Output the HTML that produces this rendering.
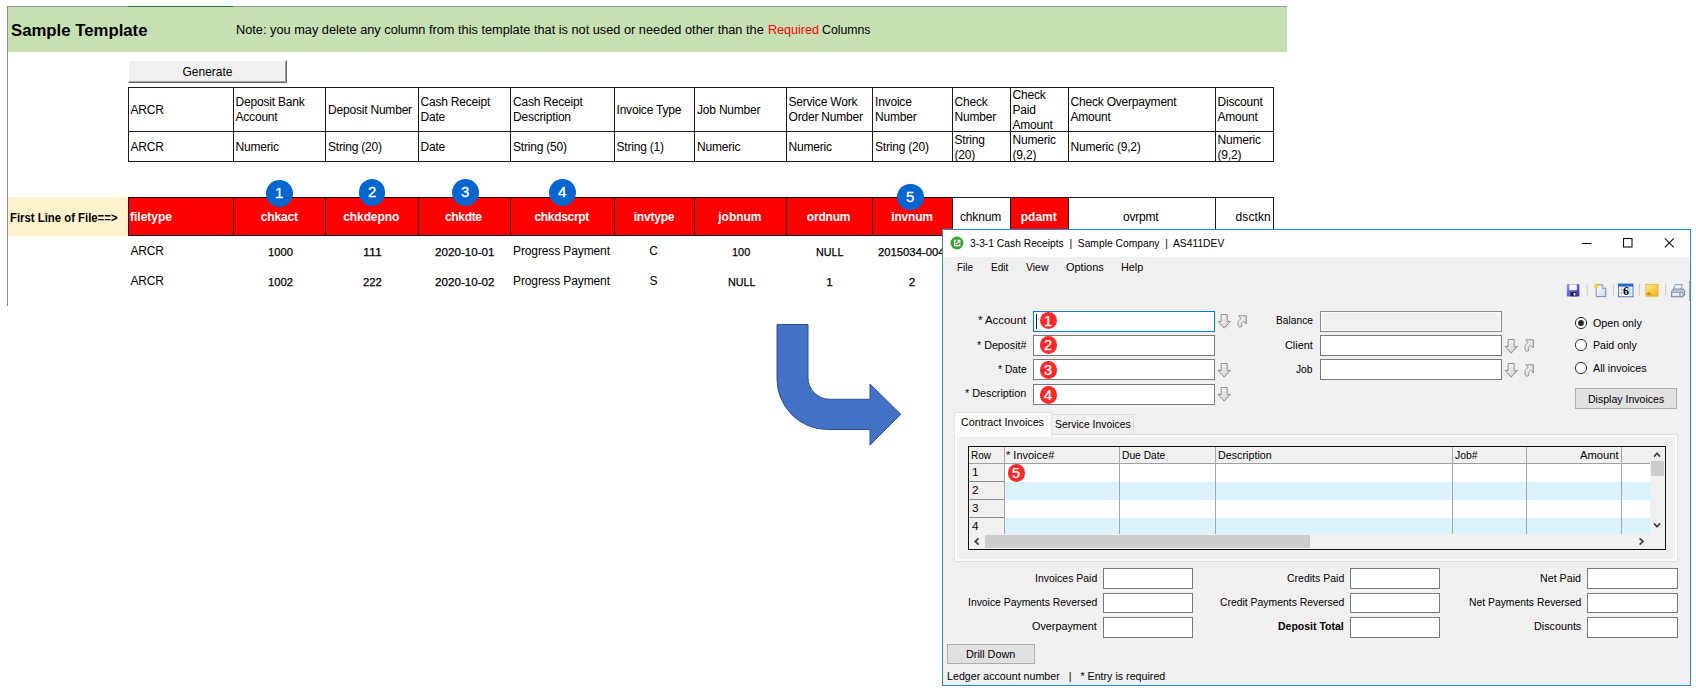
<!DOCTYPE html>
<html lang="en"><head><meta charset="utf-8"><title>Sample Template - Cash Receipts</title>
<style>
html,body{margin:0;padding:0;background:#fff;}
body{width:1696px;height:692px;position:relative;overflow:hidden;font-family:"Liberation Sans",sans-serif;color:#000;}
div,span.t,svg{position:absolute;box-sizing:border-box;}
span.t{white-space:pre;transform-origin:0 50%;}
.in{background:#fff;border:1px solid #7a7a7a;}
.btn{background:#e1e1e1;border:1px solid #adadad;}
</style></head><body>
<div style="left:7px;top:6px;width:1280px;height:1px;background:#9b9b9b;"></div>
<div style="left:7px;top:6px;width:1px;height:300px;background:#8c8c8c;"></div>
<div style="left:128px;top:6px;width:105px;height:1px;background:#217346;"></div>
<div style="left:8px;top:7px;width:1279px;height:45px;background:#c6e0b4;"></div>
<span class="t" style="left:10.50px;top:19.50px;font-size:17px;line-height:21px;transform:scaleX(0.9851);font-weight:bold;">Sample Template</span>
<span class="t" style="left:236.00px;top:21.75px;font-size:12px;line-height:16px;transform:scaleX(1.0634);">Note: you may delete any column from this template that is not used or needed other than the</span>
<span class="t" style="left:767.50px;top:21.75px;font-size:12px;line-height:16px;transform:scaleX(1.0473);color:#ff0000;">Required</span>
<span class="t" style="left:822.00px;top:21.75px;font-size:12px;line-height:16px;transform:scaleX(1.0243);">Columns</span>
<div style="left:128px;top:60px;width:159px;height:23px;background:#f0f0f0;border-top:1px solid #fff;border-left:1px solid #fff;border-right:1px solid #696969;border-bottom:1px solid #696969;box-shadow:inset -1px -1px 0 #a0a0a0;"></div>
<span class="t" style="left:182.50px;top:64.00px;font-size:12px;line-height:16px;">Generate</span>
<div style="left:127.5px;top:86.5px;width:1146px;height:75.5px;border:1px solid #1a1a1a;"></div>
<div style="left:127.5px;top:130.5px;width:1146px;height:1px;background:#1a1a1a;"></div>
<div style="left:232.5px;top:86.5px;width:1px;height:75.5px;background:#1a1a1a;"></div>
<div style="left:325.0px;top:86.5px;width:1px;height:75.5px;background:#1a1a1a;"></div>
<div style="left:417.5px;top:86.5px;width:1px;height:75.5px;background:#1a1a1a;"></div>
<div style="left:510.0px;top:86.5px;width:1px;height:75.5px;background:#1a1a1a;"></div>
<div style="left:613.5px;top:86.5px;width:1px;height:75.5px;background:#1a1a1a;"></div>
<div style="left:694.0px;top:86.5px;width:1px;height:75.5px;background:#1a1a1a;"></div>
<div style="left:785.5px;top:86.5px;width:1px;height:75.5px;background:#1a1a1a;"></div>
<div style="left:872.0px;top:86.5px;width:1px;height:75.5px;background:#1a1a1a;"></div>
<div style="left:951.5px;top:86.5px;width:1px;height:75.5px;background:#1a1a1a;"></div>
<div style="left:1009.5px;top:86.5px;width:1px;height:75.5px;background:#1a1a1a;"></div>
<div style="left:1067.5px;top:86.5px;width:1px;height:75.5px;background:#1a1a1a;"></div>
<div style="left:1214.5px;top:86.5px;width:1px;height:75.5px;background:#1a1a1a;"></div>
<span class="t" style="left:130.50px;top:101.50px;font-size:12px;line-height:16px;letter-spacing:-0.200px;">ARCR</span>
<span class="t" style="left:130.50px;top:138.50px;font-size:12px;line-height:16px;letter-spacing:-0.200px;">ARCR</span>
<span class="t" style="left:235.50px;top:94.00px;font-size:12px;line-height:16px;letter-spacing:-0.200px;">Deposit Bank</span>
<span class="t" style="left:235.50px;top:109.00px;font-size:12px;line-height:16px;letter-spacing:-0.200px;">Account</span>
<span class="t" style="left:235.50px;top:138.50px;font-size:12px;line-height:16px;letter-spacing:-0.200px;">Numeric</span>
<span class="t" style="left:328.00px;top:101.50px;font-size:12px;line-height:16px;letter-spacing:-0.200px;">Deposit Number</span>
<span class="t" style="left:328.00px;top:138.50px;font-size:12px;line-height:16px;letter-spacing:-0.200px;">String (20)</span>
<span class="t" style="left:420.50px;top:94.00px;font-size:12px;line-height:16px;letter-spacing:-0.200px;">Cash Receipt</span>
<span class="t" style="left:420.50px;top:109.00px;font-size:12px;line-height:16px;letter-spacing:-0.200px;">Date</span>
<span class="t" style="left:420.50px;top:138.50px;font-size:12px;line-height:16px;letter-spacing:-0.200px;">Date</span>
<span class="t" style="left:513.00px;top:94.00px;font-size:12px;line-height:16px;letter-spacing:-0.200px;">Cash Receipt</span>
<span class="t" style="left:513.00px;top:109.00px;font-size:12px;line-height:16px;letter-spacing:-0.200px;">Description</span>
<span class="t" style="left:513.00px;top:138.50px;font-size:12px;line-height:16px;letter-spacing:-0.200px;">String (50)</span>
<span class="t" style="left:616.50px;top:101.50px;font-size:12px;line-height:16px;letter-spacing:-0.200px;">Invoice Type</span>
<span class="t" style="left:616.50px;top:138.50px;font-size:12px;line-height:16px;letter-spacing:-0.200px;">String (1)</span>
<span class="t" style="left:697.00px;top:101.50px;font-size:12px;line-height:16px;letter-spacing:-0.200px;">Job Number</span>
<span class="t" style="left:697.00px;top:138.50px;font-size:12px;line-height:16px;letter-spacing:-0.200px;">Numeric</span>
<span class="t" style="left:788.50px;top:94.00px;font-size:12px;line-height:16px;letter-spacing:-0.200px;">Service Work</span>
<span class="t" style="left:788.50px;top:109.00px;font-size:12px;line-height:16px;letter-spacing:-0.200px;">Order Number</span>
<span class="t" style="left:788.50px;top:138.50px;font-size:12px;line-height:16px;letter-spacing:-0.200px;">Numeric</span>
<span class="t" style="left:875.00px;top:94.00px;font-size:12px;line-height:16px;letter-spacing:-0.200px;">Invoice</span>
<span class="t" style="left:875.00px;top:109.00px;font-size:12px;line-height:16px;letter-spacing:-0.200px;">Number</span>
<span class="t" style="left:875.00px;top:138.50px;font-size:12px;line-height:16px;letter-spacing:-0.200px;">String (20)</span>
<span class="t" style="left:954.50px;top:94.00px;font-size:12px;line-height:16px;letter-spacing:-0.200px;">Check</span>
<span class="t" style="left:954.50px;top:109.00px;font-size:12px;line-height:16px;letter-spacing:-0.200px;">Number</span>
<span class="t" style="left:954.50px;top:131.50px;font-size:12px;line-height:16px;letter-spacing:-0.200px;">String</span>
<span class="t" style="left:954.50px;top:146.50px;font-size:12px;line-height:16px;letter-spacing:-0.200px;">(20)</span>
<span class="t" style="left:1012.50px;top:86.50px;font-size:12px;line-height:16px;letter-spacing:-0.200px;">Check</span>
<span class="t" style="left:1012.50px;top:101.50px;font-size:12px;line-height:16px;letter-spacing:-0.200px;">Paid</span>
<span class="t" style="left:1012.50px;top:116.50px;font-size:12px;line-height:16px;letter-spacing:-0.200px;">Amount</span>
<span class="t" style="left:1012.50px;top:131.50px;font-size:12px;line-height:16px;letter-spacing:-0.200px;">Numeric</span>
<span class="t" style="left:1012.50px;top:146.50px;font-size:12px;line-height:16px;letter-spacing:-0.200px;">(9,2)</span>
<span class="t" style="left:1070.50px;top:94.00px;font-size:12px;line-height:16px;letter-spacing:-0.200px;">Check Overpayment</span>
<span class="t" style="left:1070.50px;top:109.00px;font-size:12px;line-height:16px;letter-spacing:-0.200px;">Amount</span>
<span class="t" style="left:1070.50px;top:138.50px;font-size:12px;line-height:16px;letter-spacing:-0.200px;">Numeric (9,2)</span>
<span class="t" style="left:1217.50px;top:94.00px;font-size:12px;line-height:16px;letter-spacing:-0.200px;">Discount</span>
<span class="t" style="left:1217.50px;top:109.00px;font-size:12px;line-height:16px;letter-spacing:-0.200px;">Amount</span>
<span class="t" style="left:1217.50px;top:131.50px;font-size:12px;line-height:16px;letter-spacing:-0.200px;">Numeric</span>
<span class="t" style="left:1217.50px;top:146.50px;font-size:12px;line-height:16px;letter-spacing:-0.200px;">(9,2)</span>
<div style="left:8px;top:197px;width:120px;height:39px;background:#fff2cc;"></div>
<span class="t" style="left:10.00px;top:209.50px;font-size:12.5px;line-height:16px;transform:scaleX(0.9077);font-weight:bold;">First Line of File==&gt;</span>
<div style="left:127.5px;top:197px;width:825px;height:39px;background:#ff0000;border:1px solid #1a0000;"></div>
<div style="left:232.5px;top:197px;width:1px;height:39px;background:#1a0000;"></div>
<div style="left:325.0px;top:197px;width:1px;height:39px;background:#1a0000;"></div>
<div style="left:417.5px;top:197px;width:1px;height:39px;background:#1a0000;"></div>
<div style="left:510.0px;top:197px;width:1px;height:39px;background:#1a0000;"></div>
<div style="left:613.5px;top:197px;width:1px;height:39px;background:#1a0000;"></div>
<div style="left:694.0px;top:197px;width:1px;height:39px;background:#1a0000;"></div>
<div style="left:785.5px;top:197px;width:1px;height:39px;background:#1a0000;"></div>
<div style="left:872.0px;top:197px;width:1px;height:39px;background:#1a0000;"></div>
<div style="left:951.5px;top:197px;width:322px;height:39px;background:#fff;border:1px solid #1a1a1a;"></div>
<div style="left:1010px;top:198px;width:58px;height:37.5px;background:#ff0000;"></div>
<div style="left:1009.5px;top:197px;width:1px;height:39px;background:#1a1a1a;"></div>
<div style="left:1067.5px;top:197px;width:1px;height:39px;background:#1a1a1a;"></div>
<div style="left:1214.5px;top:197px;width:1px;height:39px;background:#1a1a1a;"></div>
<span class="t" style="left:130.00px;top:209.00px;font-size:12px;line-height:16px;font-weight:bold;color:#fff;">filetype</span>
<span class="t" style="left:260.75px;top:209.00px;font-size:12px;line-height:16px;letter-spacing:-0.154px;font-weight:bold;color:#fff;">chkact</span>
<span class="t" style="left:343.25px;top:209.00px;font-size:12px;line-height:16px;letter-spacing:-0.096px;font-weight:bold;color:#fff;">chkdepno</span>
<span class="t" style="left:445.00px;top:209.00px;font-size:12px;line-height:16px;letter-spacing:-0.336px;font-weight:bold;color:#fff;">chkdte</span>
<span class="t" style="left:534.50px;top:209.00px;font-size:12px;line-height:16px;letter-spacing:-0.325px;font-weight:bold;color:#fff;">chkdscrpt</span>
<span class="t" style="left:633.75px;top:209.00px;font-size:12px;line-height:16px;letter-spacing:-0.210px;font-weight:bold;color:#fff;">invtype</span>
<span class="t" style="left:718.25px;top:209.00px;font-size:12px;line-height:16px;letter-spacing:-0.015px;font-weight:bold;color:#fff;">jobnum</span>
<span class="t" style="left:806.75px;top:209.00px;font-size:12px;line-height:16px;letter-spacing:-0.182px;font-weight:bold;color:#fff;">ordnum</span>
<span class="t" style="left:891.25px;top:209.00px;font-size:12px;line-height:16px;letter-spacing:-0.184px;font-weight:bold;color:#fff;">invnum</span>
<span class="t" style="left:960.00px;top:209.00px;font-size:12px;line-height:16px;letter-spacing:-0.154px;">chknum</span>
<span class="t" style="left:1020.75px;top:209.00px;font-size:12px;line-height:16px;font-weight:bold;color:#fff;">pdamt</span>
<span class="t" style="left:1122.91px;top:209.00px;font-size:12px;line-height:16px;letter-spacing:-0.200px;">ovrpmt</span>
<span class="t" style="left:1235.50px;top:209.00px;font-size:12px;line-height:16px;letter-spacing:0.114px;">dsctkn</span>
<div style="left:266.00px;top:179.90px;width:26.8px;height:26.8px;border-radius:50%;background:#0566d0;"></div>
<span class="t" style="left:275.03px;top:183.30px;font-size:30px;line-height:38px;transform-origin:0 0;transform:scale(0.5000,0.5);color:#fff;-webkit-text-stroke:0.6px #fff;">1</span>
<div style="left:358.50px;top:179.00px;width:26.8px;height:26.8px;border-radius:50%;background:#0566d0;"></div>
<span class="t" style="left:367.53px;top:182.40px;font-size:30px;line-height:38px;transform-origin:0 0;transform:scale(0.5000,0.5);color:#fff;-webkit-text-stroke:0.6px #fff;">2</span>
<div style="left:451.90px;top:179.00px;width:26.8px;height:26.8px;border-radius:50%;background:#0566d0;"></div>
<span class="t" style="left:460.93px;top:182.40px;font-size:30px;line-height:38px;transform-origin:0 0;transform:scale(0.5000,0.5);color:#fff;-webkit-text-stroke:0.6px #fff;">3</span>
<div style="left:548.80px;top:179.00px;width:26.8px;height:26.8px;border-radius:50%;background:#0566d0;"></div>
<span class="t" style="left:557.83px;top:182.40px;font-size:30px;line-height:38px;transform-origin:0 0;transform:scale(0.5000,0.5);color:#fff;-webkit-text-stroke:0.6px #fff;">4</span>
<div style="left:897.10px;top:183.60px;width:26.8px;height:26.8px;border-radius:50%;background:#0566d0;"></div>
<span class="t" style="left:906.13px;top:187.00px;font-size:30px;line-height:38px;transform-origin:0 0;transform:scale(0.5000,0.5);color:#fff;-webkit-text-stroke:0.6px #fff;">5</span>
<span class="t" style="left:130.50px;top:243.00px;font-size:12px;line-height:16px;letter-spacing:-0.200px;">ARCR</span>
<span class="t" style="left:513.00px;top:243.00px;font-size:12px;line-height:16px;letter-spacing:-0.114px;">Progress Payment</span>
<span class="t" style="left:267.50px;top:243.50px;font-size:11.75px;line-height:16px;transform:scaleX(0.9564);-webkit-text-stroke:0.25px #000;">1000</span>
<span class="t" style="left:362.50px;top:243.50px;font-size:11.75px;line-height:16px;transform:scaleX(1.0498);-webkit-text-stroke:0.25px #000;">111</span>
<span class="t" style="left:435.00px;top:243.50px;font-size:11.75px;line-height:16px;transform:scaleX(0.9899);-webkit-text-stroke:0.25px #000;">2020-10-01</span>
<span class="t" style="left:649.17px;top:242.70px;font-size:12px;line-height:16px;letter-spacing:-0.200px;">C</span>
<span class="t" style="left:731.75px;top:243.50px;font-size:11.75px;line-height:16px;transform:scaleX(0.9309);-webkit-text-stroke:0.25px #000;">100</span>
<span class="t" style="left:816.25px;top:243.50px;font-size:11.75px;line-height:16px;transform:scaleX(0.9154);-webkit-text-stroke:0.25px #000;">NULL</span>
<span class="t" style="left:878.25px;top:243.50px;font-size:11.75px;line-height:16px;transform:scaleX(0.9601);-webkit-text-stroke:0.25px #000;">2015034-004</span>
<span class="t" style="left:130.50px;top:272.95px;font-size:12px;line-height:16px;letter-spacing:-0.200px;">ARCR</span>
<span class="t" style="left:513.00px;top:272.95px;font-size:12px;line-height:16px;letter-spacing:-0.114px;">Progress Payment</span>
<span class="t" style="left:267.50px;top:274.25px;font-size:11.75px;line-height:16px;transform:scaleX(0.9564);-webkit-text-stroke:0.25px #000;">1002</span>
<span class="t" style="left:362.50px;top:274.25px;font-size:11.75px;line-height:16px;transform:scaleX(0.9564);-webkit-text-stroke:0.25px #000;">222</span>
<span class="t" style="left:435.00px;top:274.25px;font-size:11.75px;line-height:16px;transform:scaleX(0.9899);-webkit-text-stroke:0.25px #000;">2020-10-02</span>
<span class="t" style="left:649.50px;top:272.65px;font-size:12px;line-height:16px;letter-spacing:-0.200px;">S</span>
<span class="t" style="left:727.50px;top:274.25px;font-size:11.75px;line-height:16px;transform:scaleX(0.9154);-webkit-text-stroke:0.25px #000;">NULL</span>
<span class="t" style="left:826.23px;top:274.25px;font-size:11.75px;line-height:16px;-webkit-text-stroke:0.25px #000;">1</span>
<span class="t" style="left:908.73px;top:274.25px;font-size:11.75px;line-height:16px;-webkit-text-stroke:0.25px #000;">2</span>
<svg style="left:770px;top:318px" width="140" height="135" viewBox="770 318 140 135"><path d="M777 324.5 H808 V377.5 A21.5 21.5 0 0 0 829.5 399.25 H870 V384 L900.75 414.25 L870 445 V429.5 H827.5 A50.5 50.5 0 0 1 777 379 Z" fill="#4472c4" stroke="#2f528f" stroke-width="1" stroke-linejoin="miter"/></svg>
<div style="left:942px;top:229px;width:749px;height:457px;background:#f0f0f0;border:1px solid #2a8ad4;"></div>
<div style="left:943px;top:230px;width:747px;height:27px;background:#fff;"></div>
<svg style="left:950.2px;top:235.9px" width="14" height="14" viewBox="0 0 14 14"><circle cx="7" cy="7" r="6.5" fill="#37a637"/><path d="M6.2 4.4H4.6v5.3h5.1V8" fill="none" stroke="#fff" stroke-width="1.3"/><path d="M5.9 8.3L8.8 5.4" fill="none" stroke="#fff" stroke-width="1.3"/><path d="M6.7 3.8h3.6v3.6z" fill="#fff"/></svg>
<span class="t" style="left:969.50px;top:235.00px;font-size:11.75px;line-height:16px;transform:scaleX(0.8748);">3-3-1 Cash Receipts  |  Sample Company  |  AS411DEV</span>
<svg style="left:1576px;top:232px" width="110" height="22" viewBox="1576 232 110 22"><path d="M1582 243.5h9.5" stroke="#111" stroke-width="1.1" fill="none"/><rect x="1623.5" y="238.5" width="8.5" height="8.5" fill="none" stroke="#111" stroke-width="1.1"/><path d="M1664.8 238.3l9 9M1673.8 238.3l-9 9" stroke="#111" stroke-width="1.1" fill="none"/></svg>
<span class="t" style="left:956.75px;top:259.00px;font-size:11.75px;line-height:16px;transform:scaleX(0.8451);">File</span>
<span class="t" style="left:990.50px;top:259.00px;font-size:11.75px;line-height:16px;transform:scaleX(0.8520);">Edit</span>
<span class="t" style="left:1025.50px;top:259.00px;font-size:11.75px;line-height:16px;transform:scaleX(0.8909);">View</span>
<span class="t" style="left:1065.50px;top:259.00px;font-size:11.75px;line-height:16px;transform:scaleX(0.9322);">Options</span>
<span class="t" style="left:1120.75px;top:259.00px;font-size:11.75px;line-height:16px;transform:scaleX(0.9207);">Help</span>
<span class="t" style="left:978.00px;top:312.00px;font-size:11.75px;line-height:16px;transform:scaleX(0.9719);">* Account</span>
<span class="t" style="left:976.75px;top:337.00px;font-size:11.75px;line-height:16px;transform:scaleX(0.9131);">* Deposit#</span>
<span class="t" style="left:997.50px;top:361.00px;font-size:11.75px;line-height:16px;transform:scaleX(0.8804);">* Date</span>
<span class="t" style="left:965.00px;top:385.00px;font-size:11.75px;line-height:16px;transform:scaleX(0.9195);">* Description</span>
<span class="t" style="left:1275.75px;top:312.00px;font-size:11.75px;line-height:16px;transform:scaleX(0.8714);">Balance</span>
<span class="t" style="left:1285.00px;top:337.00px;font-size:11.75px;line-height:16px;transform:scaleX(0.9237);">Client</span>
<span class="t" style="left:1296.25px;top:361.00px;font-size:11.75px;line-height:16px;transform:scaleX(0.8710);">Job</span>
<div style="left:1033px;top:311.25px;width:182px;height:20.5px;background:#fff;border:1px solid #0078d7;"></div>
<div style="left:1036px;top:314px;width:1px;height:15px;background:#222;"></div>
<div class="in" style="left:1033px;top:335px;width:182px;height:20.5px;"></div>
<div class="in" style="left:1033px;top:359.4px;width:182px;height:20.5px;"></div>
<div class="in" style="left:1033px;top:384px;width:182px;height:20.5px;"></div>
<div style="left:1320px;top:311.25px;width:181.5px;height:20.5px;background:#f0f0f0;border:1px solid #8a8a8a;box-shadow:inset 0 0 0 1px #fafafa;"></div>
<div class="in" style="left:1320px;top:335px;width:181.5px;height:20.5px;"></div>
<div class="in" style="left:1320px;top:359.4px;width:181.5px;height:20.5px;"></div>
<div style="left:1039.65px;top:312.15px;width:17.2px;height:17.2px;border-radius:50%;background:#fa2a2a;"></div>
<span class="t" style="left:1044.22px;top:311.75px;font-size:29.0px;line-height:36px;transform-origin:0 0;transform:scale(0.5000,0.5);color:#fff;-webkit-text-stroke:0.5px #fff;">1</span>
<div style="left:1039.65px;top:336.4px;width:17.2px;height:17.2px;border-radius:50%;background:#fa2a2a;"></div>
<span class="t" style="left:1044.22px;top:336.00px;font-size:29.0px;line-height:36px;transform-origin:0 0;transform:scale(0.5000,0.5);color:#fff;-webkit-text-stroke:0.5px #fff;">2</span>
<div style="left:1039.65px;top:361.4px;width:17.2px;height:17.2px;border-radius:50%;background:#fa2a2a;"></div>
<span class="t" style="left:1044.22px;top:361.00px;font-size:29.0px;line-height:36px;transform-origin:0 0;transform:scale(0.5000,0.5);color:#fff;-webkit-text-stroke:0.5px #fff;">3</span>
<div style="left:1039.65px;top:386.4px;width:17.2px;height:17.2px;border-radius:50%;background:#fa2a2a;"></div>
<span class="t" style="left:1044.22px;top:386.00px;font-size:29.0px;line-height:36px;transform-origin:0 0;transform:scale(0.5000,0.5);color:#fff;-webkit-text-stroke:0.5px #fff;">4</span>
<svg width="0" height="0" style="left:0;top:0"><defs><linearGradient id="gg" x1="0" y1="0" x2="1" y2="1"><stop offset="0" stop-color="#ffffff"/><stop offset="1" stop-color="#c8c8c8"/></linearGradient></defs></svg>
<svg style="left:1217.4px;top:314px" width="14" height="15" viewBox="0 0 14 15"><path d="M4.2 0.5h6v7h3L7.2 14.2 1.2 7.5h3z" fill="url(#gg)" stroke="#8e8e8e" stroke-width="1" stroke-linejoin="round"/></svg>
<svg style="left:1235.6px;top:314.6px" width="12" height="14" viewBox="0.8 0 13 14" preserveAspectRatio="none"><path d="M3.8 0.8h8.2v8.2l-2.7-2.6C7.2 7.4 6.4 9 7.2 11.2l-2.6 1.2C1.6 9.4 2.6 5.8 6.3 3.5z" fill="url(#gg)" stroke="#8e8e8e" stroke-width="1" stroke-linejoin="round"/></svg>
<svg style="left:1217.4px;top:362.6px" width="14" height="15" viewBox="0 0 14 15"><path d="M4.2 0.5h6v7h3L7.2 14.2 1.2 7.5h3z" fill="url(#gg)" stroke="#8e8e8e" stroke-width="1" stroke-linejoin="round"/></svg>
<svg style="left:1217.4px;top:387px" width="14" height="15" viewBox="0 0 14 15"><path d="M4.2 0.5h6v7h3L7.2 14.2 1.2 7.5h3z" fill="url(#gg)" stroke="#8e8e8e" stroke-width="1" stroke-linejoin="round"/></svg>
<svg style="left:1504px;top:338.8px" width="14" height="15" viewBox="0 0 14 15"><path d="M4.2 0.5h6v7h3L7.2 14.2 1.2 7.5h3z" fill="url(#gg)" stroke="#8e8e8e" stroke-width="1" stroke-linejoin="round"/></svg>
<svg style="left:1522.8px;top:339.3px" width="12" height="14" viewBox="0.8 0 13 14" preserveAspectRatio="none"><path d="M3.8 0.8h8.2v8.2l-2.7-2.6C7.2 7.4 6.4 9 7.2 11.2l-2.6 1.2C1.6 9.4 2.6 5.8 6.3 3.5z" fill="url(#gg)" stroke="#8e8e8e" stroke-width="1" stroke-linejoin="round"/></svg>
<svg style="left:1504px;top:363px" width="14" height="15" viewBox="0 0 14 15"><path d="M4.2 0.5h6v7h3L7.2 14.2 1.2 7.5h3z" fill="url(#gg)" stroke="#8e8e8e" stroke-width="1" stroke-linejoin="round"/></svg>
<svg style="left:1522.8px;top:363.5px" width="12" height="14" viewBox="0.8 0 13 14" preserveAspectRatio="none"><path d="M3.8 0.8h8.2v8.2l-2.7-2.6C7.2 7.4 6.4 9 7.2 11.2l-2.6 1.2C1.6 9.4 2.6 5.8 6.3 3.5z" fill="url(#gg)" stroke="#8e8e8e" stroke-width="1" stroke-linejoin="round"/></svg>
<svg style="left:1572.9px;top:314.9px" width="16" height="16" viewBox="0 0 16 16"><circle cx="8" cy="8" r="5.6" fill="#fff" stroke="#333" stroke-width="1"/><circle cx="8" cy="8" r="2.9" fill="#222"/></svg>
<svg style="left:1572.9px;top:337.4px" width="16" height="16" viewBox="0 0 16 16"><circle cx="8" cy="8" r="5.6" fill="#fff" stroke="#333" stroke-width="1"/></svg>
<svg style="left:1572.9px;top:359.8px" width="16" height="16" viewBox="0 0 16 16"><circle cx="8" cy="8" r="5.6" fill="#fff" stroke="#333" stroke-width="1"/></svg>
<span class="t" style="left:1592.75px;top:315.00px;font-size:11.75px;line-height:16px;transform:scaleX(0.9101);">Open only</span>
<span class="t" style="left:1592.75px;top:337.00px;font-size:11.75px;line-height:16px;transform:scaleX(0.9051);">Paid only</span>
<span class="t" style="left:1592.75px;top:360.00px;font-size:11.75px;line-height:16px;transform:scaleX(0.9103);">All invoices</span>
<div class="btn" style="left:1575.25px;top:388.25px;width:102px;height:20.75px;"></div>
<span class="t" style="left:1587.50px;top:391.00px;font-size:11.75px;line-height:16px;transform:scaleX(0.8982);">Display Invoices</span>
<svg style="left:1560px;top:280px" width="130" height="22" viewBox="1560 280 130 22">
<defs><linearGradient id="sv" x1="0" y1="0" x2="1" y2="1"><stop offset="0" stop-color="#9a9af2"/><stop offset="1" stop-color="#2c2ca0"/></linearGradient>
<linearGradient id="yl" x1="0" y1="0" x2="1" y2="1"><stop offset="0" stop-color="#ffeb8c"/><stop offset="1" stop-color="#efb020"/></linearGradient>
<linearGradient id="pg" x1="0" y1="0" x2="1" y2="1"><stop offset="0" stop-color="#ffffff"/><stop offset="1" stop-color="#c9d3ea"/></linearGradient></defs>
<g><rect x="1566.8" y="284" width="12.6" height="12.4" rx="1" fill="url(#sv)"/><rect x="1569.4" y="284.4" width="7.4" height="5.8" fill="#f6f6fc"/><rect x="1570.6" y="292.2" width="5.6" height="4" fill="#1c1c40"/><rect x="1573.6" y="293" width="1.8" height="2.6" fill="#e8e8f4"/></g>
<path d="M1587.2 284v11.5M1613.4 284v11.5M1639.4 284v11.5M1665.7 284v11.5" stroke="#c9c9c9" stroke-width="1"/>
<g><path d="M1596.2 284.8h6l3.6 3.6v8.2h-9.6z" fill="url(#pg)" stroke="#6f7fa8" stroke-width="0.9"/><path d="M1602.2 284.8v3.6h3.6" fill="#dfe6f5" stroke="#6f7fa8" stroke-width="0.7"/><path d="M1596.4 283v6M1593.4 286h6M1594.3 283.9l4.2 4.2M1598.5 283.9l-4.2 4.2" stroke="#f7cf2a" stroke-width="1"/></g>
<g><rect x="1618.4" y="284" width="14.6" height="12.8" fill="#f7faff" stroke="#2c55a8" stroke-width="0.8"/><rect x="1618.4" y="284" width="14.6" height="2.6" fill="#2a63d4"/><path d="M1621.6 286.6v10M1629.8 286.6v10M1618.4 289.6h14.6M1618.4 293h14.6" stroke="#9db7e6" stroke-width="0.7"/><text x="1625.9" y="295.2" font-family="Liberation Serif, serif" font-weight="bold" font-size="12" text-anchor="middle" fill="#000">6</text></g>
<g><rect x="1645.9" y="284.2" width="12.2" height="12" fill="url(#yl)" stroke="#d9a520" stroke-width="0.6"/><path d="M1646.6 295.6v-2.4l2.2-1.4 2 1.4 1.6 2.4z" fill="#d9991a"/></g>
<g><path d="M1675.4 284.6h7l-1.6 5h-7.6z" fill="#eef1f6" stroke="#6f86a8" stroke-width="0.8"/><path d="M1671.6 291.2l2-2.2h9.4l1.6 1.6v4.4l-1.8 1.8h-11.2z" fill="#b9c7dc" stroke="#5c7599" stroke-width="0.8"/><path d="M1671.8 292.4h11v4h-11z" fill="#e9eef6" stroke="#5c7599" stroke-width="0.6"/><rect x="1679.4" y="293.4" width="1.2" height="1.2" fill="#c22"/><rect x="1679.4" y="294.8" width="1.2" height="1" fill="#2a2"/></g>
</svg>
<div style="left:1689px;top:281px;width:1px;height:20px;background:#a6a6a6;"></div>
<div style="left:954px;top:433.5px;width:724px;height:128px;background:#f0f0f0;border:1px solid #dedede;box-shadow:inset 0 0 0 2px #fbfbfb;"></div>
<div style="left:1051px;top:413.5px;width:83px;height:20.5px;background:#f0f0f0;border:1px solid #dcdcdc;border-bottom:none;"></div>
<div style="left:954px;top:412px;width:97.5px;height:23.5px;background:#fdfdfd;border:1px solid #e2e2e2;border-bottom:none;"></div>
<span class="t" style="left:961.25px;top:414.00px;font-size:11.75px;line-height:16px;transform:scaleX(0.9143);">Contract Invoices</span>
<span class="t" style="left:1055.00px;top:416.00px;font-size:11.75px;line-height:16px;transform:scaleX(0.8855);">Service Invoices</span>
<div style="left:968px;top:445.5px;width:698px;height:104px;background:#fff;border:1px solid #111;box-shadow:inset 0 0 0 1px rgba(0,0,0,0.35);"></div>
<div style="left:969px;top:446.5px;width:681px;height:17px;background:#f0f0f0;border-bottom:1px solid #a0a0a0;"></div>
<div style="left:969px;top:464.25px;width:36px;height:17.25px;background:#f0f0f0;border-bottom:1px solid #8a8a8a;"></div>
<div style="left:1004.5px;top:481.5px;width:645px;height:18.0px;background:#daf2fa;"></div>
<div style="left:969px;top:481.5px;width:36px;height:18.0px;background:#f0f0f0;border-bottom:1px solid #8a8a8a;"></div>
<div style="left:969px;top:499.5px;width:36px;height:18.25px;background:#f0f0f0;border-bottom:1px solid #8a8a8a;"></div>
<div style="left:1004.5px;top:517.75px;width:645px;height:16.25px;background:#daf2fa;"></div>
<div style="left:969px;top:517.75px;width:36px;height:16.25px;background:#f0f0f0;"></div>
<div style="left:1003.75px;top:446.5px;width:1px;height:88px;background:#a6a6a6;"></div>
<div style="left:1118.75px;top:446.5px;width:1px;height:88px;background:#a6a6a6;"></div>
<div style="left:1214.75px;top:446.5px;width:1px;height:88px;background:#a6a6a6;"></div>
<div style="left:1452.0px;top:446.5px;width:1px;height:88px;background:#a6a6a6;"></div>
<div style="left:1525.75px;top:446.5px;width:1px;height:88px;background:#a6a6a6;"></div>
<div style="left:1621.0px;top:446.5px;width:1px;height:88px;background:#a6a6a6;"></div>
<div style="left:1649.5px;top:446.5px;width:15.5px;height:88px;background:#f0f0f0;"></div>
<div style="left:1650.5px;top:461px;width:13px;height:15px;background:#cdcdcd;"></div>
<svg style="left:1652px;top:449px" width="11" height="10" viewBox="1652 449 11 10"><path d="M1654 456.6L1657 453.2 1660 456.6" fill="none" stroke="#404040" stroke-width="1.7"/></svg>
<svg style="left:1652px;top:520px" width="11" height="10" viewBox="1652 520 11 10"><path d="M1654 523.4L1657 526.8 1660 523.4" fill="none" stroke="#404040" stroke-width="1.7"/></svg>
<div style="left:969px;top:534px;width:696px;height:14.5px;background:#f0f0f0;"></div>
<div style="left:985px;top:535px;width:325px;height:12.5px;background:#cdcdcd;"></div>
<svg style="left:972px;top:536px" width="10" height="11" viewBox="972 536 10 11"><path d="M978.6 538.4L975.2 541.5 978.6 544.6" fill="none" stroke="#404040" stroke-width="1.7"/></svg>
<svg style="left:1636px;top:536px" width="10" height="11" viewBox="1636 536 10 11"><path d="M1639.6 538.4L1643 541.5 1639.6 544.6" fill="none" stroke="#404040" stroke-width="1.7"/></svg>
<span class="t" style="left:971.25px;top:447.00px;font-size:11.75px;line-height:16px;transform:scaleX(0.8509);">Row</span>
<span class="t" style="left:1006.25px;top:447.00px;font-size:11.75px;line-height:16px;transform:scaleX(0.9351);">* Invoice#</span>
<span class="t" style="left:1121.75px;top:447.00px;font-size:11.75px;line-height:16px;transform:scaleX(0.8713);">Due Date</span>
<span class="t" style="left:1218.00px;top:447.00px;font-size:11.75px;line-height:16px;transform:scaleX(0.9145);">Description</span>
<span class="t" style="left:1455.25px;top:447.00px;font-size:11.75px;line-height:16px;transform:scaleX(0.8831);">Job#</span>
<span class="t" style="left:1579.50px;top:447.00px;font-size:11.75px;line-height:16px;transform:scaleX(0.9569);">Amount</span>
<span class="t" style="left:971.50px;top:464.00px;font-size:23.5px;line-height:32px;transform-origin:0 0;transform:scale(0.5000,0.5);">1</span>
<span class="t" style="left:971.50px;top:482.00px;font-size:23.5px;line-height:32px;transform-origin:0 0;transform:scale(0.5000,0.5);">2</span>
<span class="t" style="left:971.50px;top:500.00px;font-size:23.5px;line-height:32px;transform-origin:0 0;transform:scale(0.5000,0.5);">3</span>
<span class="t" style="left:971.50px;top:518.00px;font-size:23.5px;line-height:32px;transform-origin:0 0;transform:scale(0.5000,0.5);">4</span>
<div style="left:1007.8px;top:464.4px;width:17.2px;height:17.2px;border-radius:50%;background:#fa2a2a;"></div>
<span class="t" style="left:1012.37px;top:464.00px;font-size:29.0px;line-height:36px;transform-origin:0 0;transform:scale(0.5000,0.5);color:#fff;-webkit-text-stroke:0.5px #fff;">5</span>
<div class="in" style="left:1102.5px;top:568.25px;width:90.5px;height:20.75px;"></div>
<div class="in" style="left:1102.5px;top:592.5px;width:90.5px;height:20.75px;"></div>
<div class="in" style="left:1102.5px;top:616.75px;width:90.5px;height:20.75px;"></div>
<div class="in" style="left:1349.5px;top:568.25px;width:90.5px;height:20.75px;"></div>
<div class="in" style="left:1349.5px;top:592.5px;width:90.5px;height:20.75px;"></div>
<div class="in" style="left:1349.5px;top:616.75px;width:90.5px;height:20.75px;"></div>
<div class="in" style="left:1587px;top:568.25px;width:90.5px;height:20.75px;"></div>
<div class="in" style="left:1587px;top:592.5px;width:90.5px;height:20.75px;"></div>
<div class="in" style="left:1587px;top:616.75px;width:90.5px;height:20.75px;"></div>
<span class="t" style="left:1034.50px;top:570.00px;font-size:11.75px;line-height:16px;transform:scaleX(0.8907);">Invoices Paid</span>
<span class="t" style="left:967.50px;top:594.00px;font-size:11.75px;line-height:16px;transform:scaleX(0.8835);">Invoice Payments Reversed</span>
<span class="t" style="left:1032.00px;top:618.00px;font-size:11.75px;line-height:16px;transform:scaleX(0.9181);">Overpayment</span>
<span class="t" style="left:1286.50px;top:570.00px;font-size:11.75px;line-height:16px;transform:scaleX(0.8945);">Credits Paid</span>
<span class="t" style="left:1219.50px;top:594.00px;font-size:11.75px;line-height:16px;transform:scaleX(0.8849);">Credit Payments Reversed</span>
<span class="t" style="left:1278.00px;top:618.00px;font-size:11.75px;line-height:16px;transform:scaleX(0.8940);font-weight:bold;">Deposit Total</span>
<span class="t" style="left:1540.25px;top:570.00px;font-size:11.75px;line-height:16px;transform:scaleX(0.9098);">Net Paid</span>
<span class="t" style="left:1469.00px;top:594.00px;font-size:11.75px;line-height:16px;transform:scaleX(0.8815);">Net Payments Reversed</span>
<span class="t" style="left:1534.00px;top:618.00px;font-size:11.75px;line-height:16px;transform:scaleX(0.9159);">Discounts</span>
<div class="btn" style="left:946.75px;top:644.25px;width:88.5px;height:19.75px;"></div>
<span class="t" style="left:965.75px;top:646.00px;font-size:11.75px;line-height:16px;transform:scaleX(0.9200);">Drill Down</span>
<span class="t" style="left:946.75px;top:668.00px;font-size:11.75px;line-height:16px;transform:scaleX(0.9089);">Ledger account number   |   * Entry is required</span>
</body></html>
